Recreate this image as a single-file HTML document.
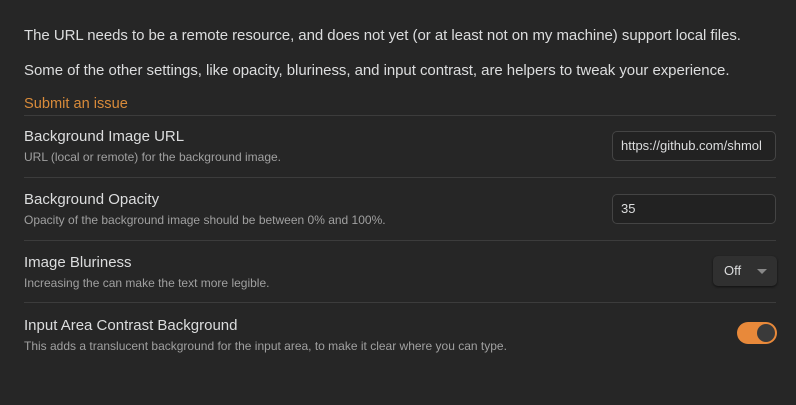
<!DOCTYPE html><html><head><style>
body{margin:0;width:796px;height:405px;background:#262626;font-family:"Liberation Sans",sans-serif;color:#dcddde;position:relative;overflow:hidden}
.a{position:absolute;white-space:nowrap}
.p{font-size:15px;left:24px;color:#dcddde;letter-spacing:-0.05px}
.t{font-size:15px;left:24px;color:#dcddde}
.d{font-size:12px;left:24px;color:#a0a0a0}
.hr{position:absolute;left:24px;width:752px;height:1px;background:#3c3c3c}
.in{position:absolute;left:612px;border:1px solid #444;border-radius:5px;background:#222;font-size:13px;line-height:28px;padding-left:8px;box-sizing:border-box;width:164px;height:30px;color:#dcddde;overflow:hidden}
</style></head><body>
<div class="a p" style="top:27px">The URL needs to be a remote resource, and does not yet (or at least not on my machine) support local files.</div>
<div class="a p" style="top:62px">Some of the other settings, like opacity, bluriness, and input contrast, are helpers to tweak your experience.</div>
<div class="a" style="left:24px;top:96px;font-size:14.6px;color:#d98b3a">Submit an issue</div>
<div class="hr" style="top:115px"></div>
<div class="a t" style="top:128px">Background Image URL</div>
<div class="a d" style="top:150px">URL (local or remote) for the background image.</div>
<div class="in" style="top:131px">https://github.com/shmol</div>
<div class="hr" style="top:177px"></div>
<div class="a t" style="top:191px">Background Opacity</div>
<div class="a d" style="top:213px">Opacity of the background image should be between 0% and 100%.</div>
<div class="in" style="top:194px">35</div>
<div class="hr" style="top:240px"></div>
<div class="a t" style="top:254px">Image Bluriness</div>
<div class="a d" style="top:276px">Increasing the can make the text more legible.</div>
<div style="position:absolute;left:713px;top:256px;width:64px;height:30px;background:#303030;border-radius:5px;box-shadow:0 1px 2px #111;font-size:13px;line-height:30px;color:#dcddde"><span style="margin-left:11px">Off</span><span style="position:absolute;right:10px;top:13px;border-left:5px solid transparent;border-right:5px solid transparent;border-top:5px solid #888"></span></div>
<div class="hr" style="top:302px"></div>
<div class="a t" style="top:317px">Input Area Contrast Background</div>
<div class="a d" style="top:339px">This adds a translucent background for the input area, to make it clear where you can type.</div>
<div style="position:absolute;left:737px;top:322px;width:40px;height:22px;border-radius:11px;background:#e8893a"><div style="position:absolute;left:20px;top:2px;width:18px;height:18px;border-radius:50%;background:#3a3a3a"></div></div>
</body></html>
